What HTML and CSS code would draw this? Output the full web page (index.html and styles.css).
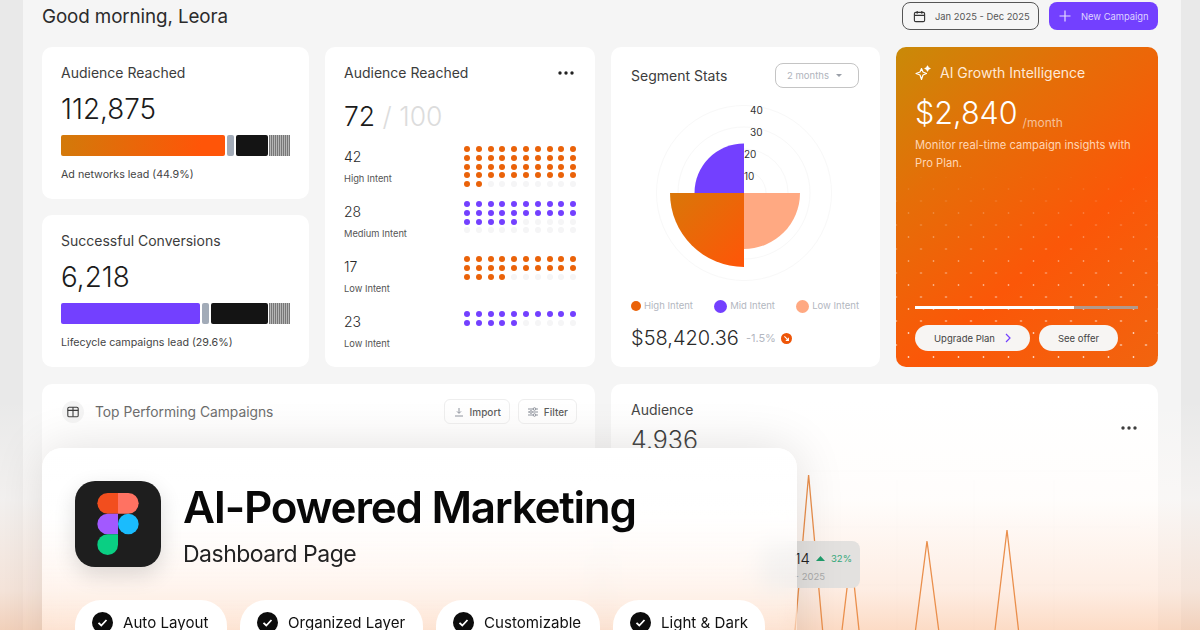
FILE: index.html
```html
<!DOCTYPE html>
<html lang="en">
<head>
<meta charset="utf-8">
<title>AI-Powered Marketing Dashboard</title>
<link rel="stylesheet" href="styles.css">
</head>
<body>
<div class="stage">
  <main class="page">
    <header class="top">
      <h1 class="hello">Good morning, Leora</h1>
      <div class="top-actions">
        <button class="date-btn">
          <svg width="13" height="13" viewBox="0 0 14 14" fill="none" stroke="#333" stroke-width="1.2"><rect x="1.5" y="2.5" width="11" height="10" rx="1.5"/><path d="M1.5 5.8h11M4.5 1v3M9.5 1v3"/></svg>
          <span>Jan 2025 - Dec 2025</span>
        </button>
        <button class="new-btn">
          <svg width="12" height="12" viewBox="0 0 12 12" stroke="#e6dcff" stroke-width="1.2"><path d="M6 .5v11M.5 6h11"/></svg>
          <span>New Campaign</span>
        </button>
      </div>
    </header>

    <section class="row-one">
      <div class="stack">
        <article class="card metric">
          <h2 class="title">Audience Reached</h2>
          <div class="big">112,875</div>
          <div class="bar">
            <span class="seg seg-orange"></span><span class="seg seg-grey"></span><span class="seg seg-black"></span><span class="seg-hatch"></span>
          </div>
          <p class="caption">Ad networks lead (44.9%)</p>
        </article>
        <article class="card metric">
          <h2 class="title">Successful Conversions</h2>
          <div class="big">6,218</div>
          <div class="bar">
            <span class="seg seg-purple"></span><span class="seg seg-grey"></span><span class="seg seg-black2"></span><span class="seg-hatch"></span>
          </div>
          <p class="caption">Lifecycle campaigns lead (29.6%)</p>
        </article>
      </div>

      <article class="card intent">
        <div class="intent-head">
          <h2 class="title">Audience Reached</h2>
          <svg class="more" width="16" height="4" viewBox="0 0 16 4" fill="#222"><circle cx="2" cy="2" r="1.7"/><circle cx="8" cy="2" r="1.7"/><circle cx="14" cy="2" r="1.7"/></svg>
        </div>
        <div class="score"><span>72</span> <em>/ 100</em></div>
        <div class="intent-row">
          <div class="intent-text"><div class="num">42</div><div class="lab">High Intent</div></div>
          <div class="dots o">
            <i></i><i></i><i></i><i></i><i></i><i></i><i></i><i></i><i></i><i></i>
            <i></i><i></i><i></i><i></i><i></i><i></i><i></i><i></i><i></i><i></i>
            <i></i><i></i><i></i><i></i><i></i><i></i><i></i><i></i><i></i><i></i>
            <i></i><i></i><i></i><i></i><i></i><i></i><i></i><i></i><i></i><i></i>
            <i></i><i></i><b></b><b></b><b></b><b></b><b></b><b></b><b></b><b></b>
          </div>
        </div>
        <div class="intent-row">
          <div class="intent-text"><div class="num">28</div><div class="lab">Medium Intent</div></div>
          <div class="dots p">
            <i></i><i></i><i></i><i></i><i></i><i></i><i></i><i></i><i></i><i></i>
            <i></i><i></i><i></i><i></i><i></i><i></i><i></i><i></i><i></i><i></i>
            <i></i><i></i><i></i><i></i><i></i><b></b><b></b><b></b><b></b><b></b>
            <b></b><b></b><b></b><b></b><b></b><b></b><b></b><b></b><b></b><b></b>
          </div>
        </div>
        <div class="intent-row">
          <div class="intent-text"><div class="num">17</div><div class="lab">Low Intent</div></div>
          <div class="dots o">
            <i></i><i></i><i></i><i></i><i></i><i></i><i></i><i></i><i></i><i></i>
            <i></i><i></i><i></i><i></i><i></i><i></i><i></i><i></i><i></i><i></i>
            <i></i><i></i><i></i><i></i><b></b><b></b><b></b><b></b><b></b><b></b>
          </div>
        </div>
        <div class="intent-row">
          <div class="intent-text"><div class="num">23</div><div class="lab">Low Intent</div></div>
          <div class="dots p">
            <i></i><i></i><i></i><i></i><i></i><i></i><i></i><i></i><i></i><i></i>
            <i></i><i></i><i></i><i></i><i></i><b></b><b></b><b></b><b></b><b></b>
          </div>
        </div>
      </article>

      <article class="card segment">
        <div class="segment-head">
          <h2 class="title">Segment Stats</h2>
          <button class="range">2 months <svg width="6" height="3" viewBox="0 0 6 3" fill="#9a9fa8"><path d="M0 0h6L3 3z"/></svg></button>
        </div>
        <svg class="polar" width="176" height="176" viewBox="0 0 176 176">
          <defs>
            <linearGradient id="og" x1="0" y1="0" x2="1" y2="1"><stop offset="0" stop-color="#d97708"/><stop offset="1" stop-color="#ff5508"/></linearGradient>
          </defs>
          <g fill="none" stroke="#f8f8f8">
            <circle cx="88" cy="88" r="87.5"/><circle cx="88" cy="88" r="66"/><circle cx="88" cy="88" r="44"/><circle cx="88" cy="88" r="22"/>
          </g>
          <path d="M88 88V38.5A49.5 49.5 0 0 0 38.5 88Z" fill="#7340ff"/>
          <path d="M88 88H14A74 74 0 0 0 88 162Z" fill="url(#og)"/>
          <path d="M88 88h56A56 56 0 0 1 88 144Z" fill="#ffa982"/>
          <g class="polar-ticks">
            <text x="94" y="9">40</text><text x="94" y="31">30</text><text x="88" y="53">20</text><text x="88" y="75">10</text>
          </g>
        </svg>
        <ul class="legend">
          <li><i class="l1"></i>High Intent</li>
          <li><i class="l2"></i>Mid Intent</li>
          <li><i class="l3"></i>Low Intent</li>
        </ul>
        <div class="amount">
          <strong>$58,420.36</strong><span>-1.5%</span>
          <svg width="11" height="11" viewBox="0 0 11 11"><circle cx="5.5" cy="5.5" r="5.5" fill="#ee5508"/><path d="M3.4 3.4 7.2 7.2M7.4 4.8v2.6H4.8" fill="none" stroke="#fff" stroke-width="1.1"/></svg>
        </div>
      </article>

      <article class="card pro">
        <h2 class="pro-title">
          <svg width="16" height="16" viewBox="0 0 16 16" fill="none" stroke="#fff" stroke-width="1.2" stroke-linejoin="round"><path d="M6.5 3.5 8 7l3.5 1.5L8 10l-1.5 4.5L5 10 1 8.5 5 7z"/><path d="M12.5 1 13.2 2.8 15 3.5 13.2 4.2 12.5 6 11.8 4.2 10 3.5 11.8 2.8z" fill="#fff"/></svg>
          AI Growth Intelligence
        </h2>
        <div class="price"><strong>$2,840</strong><span>/month</span></div>
        <p class="pro-text">Monitor real-time campaign insights with Pro Plan.</p>
        <div class="pro-foot">
          <div class="progress"><span></span></div>
          <div class="pro-actions">
            <button class="pill-btn upgrade">Upgrade Plan
              <svg width="6" height="10" viewBox="0 0 6 10" fill="none" stroke="#7340ff" stroke-width="1.2"><path d="M1 1l4 4-4 4"/></svg>
            </button>
            <button class="pill-btn offer">See offer</button>
          </div>
        </div>
      </article>
    </section>

    <section class="row-two">
      <article class="card campaigns">
        <div class="camp-left">
          <span class="round-icon">
            <svg width="12" height="12" viewBox="0 0 12 12" fill="none" stroke="#333" stroke-width="1.1"><rect x=".8" y="1.2" width="10.4" height="9.6" rx="1.4"/><path d="M.8 4.4h10.4M6 1.2v9.6"/></svg>
          </span>
          <h2 class="camp-title">Top Performing Campaigns</h2>
        </div>
        <div class="camp-actions">
          <button class="tool-btn">
            <svg width="10" height="10" viewBox="0 0 10 10" fill="none" stroke="#8a8f99"><path d="M5 1v5M3 4.4 5 6.4l2-2M1 9h8"/></svg>Import</button>
          <button class="tool-btn">
            <svg width="10" height="10" viewBox="0 0 10 10" fill="none" stroke="#8a8f99"><path d="M0 2h5M8 2h2M0 5h1.500M4.500 5h5.500M0 8h5M8 8h2"/><circle cx="6.500" cy="2" r="1.300"/><circle cx="3" cy="5" r="1.300"/><circle cx="6.500" cy="8" r="1.300"/></svg>Filter</button>
        </div>
      </article>
      <article class="card audience">
        <div class="aud-head">
          <div>
            <h2 class="title">Audience</h2>
            <div class="big aud-num">4.936</div>
          </div>
          <svg class="more aud-more" width="16" height="4" viewBox="0 0 16 4" fill="#222"><circle cx="2" cy="2" r="1.7"/><circle cx="8" cy="2" r="1.7"/><circle cx="14" cy="2" r="1.7"/></svg>
        </div>
      </article>
    </section>
  </main>

  <div class="fade"></div>

  <svg class="spikes" width="1200" height="630" viewBox="0 0 1200 630" fill="none">
    <g stroke="#000" stroke-opacity=".012">
      <path d="M810 471H1140M810 527H1140M810 585H1140M897 480V630M974 480V630M1054 480V630"/>
    </g>
    <g stroke="#ea8f4c" stroke-width="1.3">
      <path d="M795 630 808.6 475 822.6 630"/>
      <path d="M842 630 851 555 859 630"/>
      <path d="M915.5 630 927 541 938.7 630"/>
      <path d="M995 630 1007 530 1018.5 630"/>
    </g>
  </svg>
  <div class="tip">
    <div class="tip-top"><span class="tip-num">14</span><svg width="9" height="5" viewBox="0 0 9 5" fill="#1f9d6b"><path d="M4.500 0 9 5H0z"/></svg><span class="tip-pct">32%</span></div>
    <div class="tip-date">- 2025</div>
  </div>

  <aside class="promo">
    <div class="promo-head">
      <div class="app-icon">
        <svg width="42" height="62" viewBox="0 0 41 61.5">
          <path d="M0 10.25A10.25 10.25 0 0 1 10.25 0H20.5V20.5H10.25A10.25 10.25 0 0 1 0 10.25Z" fill="#f24e1e"/>
          <path d="M20.5 0H30.75a10.25 10.25 0 0 1 0 20.5H20.5Z" fill="#ff7262"/>
          <path d="M0 30.75A10.25 10.25 0 0 1 10.25 20.5H20.5V41H10.25A10.25 10.25 0 0 1 0 30.75Z" fill="#a259ff"/>
          <circle cx="30.75" cy="30.75" r="10.25" fill="#1abcfe"/>
          <path d="M0 51.25A10.25 10.25 0 0 1 10.25 41H20.5V51.25a10.25 10.25 0 0 1-20.5 0Z" fill="#0acf83"/>
        </svg>
      </div>
      <div class="promo-copy">
        <h2 class="promo-title">AI-Powered Marketing</h2>
        <p class="promo-sub">Dashboard Page</p>
      </div>
    </div>
    <ul class="chips">
      <li class="chip chip-a"><svg width="21" height="21" viewBox="0 0 21 21"><circle cx="10.5" cy="10.5" r="10.5" fill="#0c0c0c"/><path d="M6.5 10.8 9.3 13.5 14.5 8" fill="none" stroke="#fff" stroke-width="1.8"/></svg><span>Auto Layout</span></li>
      <li class="chip chip-b"><svg width="21" height="21" viewBox="0 0 21 21"><circle cx="10.5" cy="10.5" r="10.5" fill="#0c0c0c"/><path d="M6.5 10.8 9.3 13.5 14.5 8" fill="none" stroke="#fff" stroke-width="1.8"/></svg><span>Organized Layer</span></li>
      <li class="chip chip-c"><svg width="21" height="21" viewBox="0 0 21 21"><circle cx="10.5" cy="10.5" r="10.5" fill="#0c0c0c"/><path d="M6.5 10.8 9.3 13.5 14.5 8" fill="none" stroke="#fff" stroke-width="1.8"/></svg><span>Customizable</span></li>
      <li class="chip chip-a"><svg width="21" height="21" viewBox="0 0 21 21"><circle cx="10.5" cy="10.5" r="10.5" fill="#0c0c0c"/><path d="M6.5 10.8 9.3 13.5 14.5 8" fill="none" stroke="#fff" stroke-width="1.8"/></svg><span>Light &amp; Dark</span></li>
    </ul>
  </aside>
</div>
</body>
</html>
```
FILE: styles.css
```css
* { box-sizing: border-box; }
html, body { margin: 0; padding: 0; }
body { background: #e9e9e9; font-family: "Inter", "Liberation Sans", sans-serif; color: #222; }
button { font: inherit; cursor: pointer; }
h1, h2, p, ul { margin: 0; padding: 0; font-weight: 400; }
ul { list-style: none; }

.stage { position: relative; width: 1200px; height: 630px; overflow: hidden; background: #e9e9e9; }
.page { width: 1158px; height: 630px; margin-left: 23px; padding: 2px 23px 0 19px; background: #f5f5f5; overflow: hidden; }

/* header */
.top { display: flex; justify-content: space-between; align-items: center; height: 28px; }
.hello { font-size: 18.8px; color: #2b2b2b; letter-spacing: -0.1px; margin-top: 1px; }
.top-actions { display: flex; gap: 10px; }
.date-btn, .new-btn { height: 28px; border-radius: 8px; display: flex; align-items: center; font-size: 9.4px; }
.date-btn { width: 137px; background: transparent; border: 1px solid #555; color: #555; padding: 0 0 0 10px; gap: 9px; }
.new-btn { width: 109px; background: #7340ff; border: 0; color: #dfd4ff; padding: 0 0 0 10px; gap: 10px; }

/* first row */
.row-one { display: grid; grid-template-columns: 267px 270px 269px 262px; gap: 16px; height: 320px; margin-top: 17px; }
.stack { display: grid; grid-template-rows: 152px 152px; gap: 16px; }
.card { background: #fff; border-radius: 10px; }
.metric { padding: 17px 19px 0; }
.title { font-size: 14px; line-height: 18px; color: #3c3c3c; }
.big { font-size: 27.8px; line-height: 34px; font-weight: 300; color: #1b1b1b; margin-top: 10px; }
.bar { display: flex; height: 21px; gap: 2px; margin-top: 9px; }
.seg { border-radius: 2px; display: block; }
.seg-orange { width: 164px; background: linear-gradient(100deg, #d27a0a, #ff5508 85%); }
.seg-purple { width: 139px; background: #7340ff; }
.seg-grey { width: 7px; background: #a2abb8; }
.seg-black { width: 32px; background: #141414; }
.seg-black2 { width: 57px; background: #141414; }
.seg-hatch { margin-left: -1px; flex: 1; background: repeating-linear-gradient(90deg, #777 0, #777 1px, #b5b5b5 1px, #b5b5b5 2px); }
.caption { font-size: 10.7px; line-height: 16px; color: #444; margin-top: 11px; }

/* intent */
.intent { padding: 17px 18px 0 19px; }
.intent-head { display: flex; justify-content: space-between; align-items: center; height: 18px; }
.more { margin-right: 3px; }
.score { font-size: 26.5px; line-height: 34px; font-weight: 300; margin-top: 17px; color: #1b1b1b; height: 34px; }
.score em { font-style: normal; color: #dcdcdc; }
.intent-row { display: flex; justify-content: space-between; height: 55px; }
.score + .intent-row { margin-top: 13px; }
.intent-text { padding-top: 1px; }
.num { font-size: 14px; line-height: 20px; color: #2a2a2a; font-weight: 300; }
.lab { font-size: 9.3px; line-height: 14px; margin-top: 5px; color: #555; }
.dots { display: grid; grid-template-columns: repeat(10, 6px); column-gap: 5.8px; row-gap: 2.75px; width: 113px; align-content: start; }
.dots i, .dots b { display: block; width: 6px; height: 6px; border-radius: 50%; }
.dots b { background: #f5f5f6; }
.o i { background: #ea6209; }
.p i { background: #7340ff; }

/* segment */
.segment { padding: 16px 21px 0 20px; }
.segment-head { display: flex; justify-content: space-between; align-items: center; height: 25px; }
.range { width: 84px; height: 25px; background: #fff; border: 1px solid #c4c4c4; border-radius: 8px; color: #afb4bc; font-size: 9.5px; display: flex; align-items: center; justify-content: center; gap: 7px; padding: 0 5px 0 0; }
.polar { display: block; margin: 17px 0 0 25px; }
.polar-ticks { font-family: "Inter", sans-serif; font-size: 10px; fill: #333; }
.legend { display: flex; justify-content: space-between; margin-top: 18px; height: 14px; font-size: 9.5px; line-height: 14px; color: #b3b7bf; }
.legend li { display: flex; align-items: center; gap: 3px; }
.legend i { width: 13px; height: 13px; border-radius: 50%; display: block; }
.legend .l1 { width: 10px; height: 10px; }
.l1 { background: #ea6209; } .l2 { background: #7340ff; } .l3 { background: #ffa982; }
.amount { display: flex; align-items: center; height: 28px; margin-top: 11px; }
.amount strong { font-weight: 300; font-size: 20px; color: #2a2a2a; }
.amount span { font-size: 11px; color: #b3b7bf; margin: 0 5px 0 7px; }

/* pro */
.pro { position: relative; overflow: hidden; padding: 17px 20px 16px 19px; display: flex; flex-direction: column; color: #fff; background: linear-gradient(140deg, #c98a08 0, #e56e08 30%, #fb5708 62%, #f1640f 100%); }
.pro::before { content: ""; position: absolute; inset: 130px 0 0 0; background-image: radial-gradient(circle, rgba(255,255,255,.7) .8px, transparent 1.2px), radial-gradient(circle, rgba(255,255,255,.7) .8px, transparent 1.2px); background-size: 25px 24px; background-position: 0 0, 12.5px 12px; -webkit-mask-image: linear-gradient(to bottom, rgba(0,0,0,.06), #000 85%); mask-image: linear-gradient(to bottom, rgba(0,0,0,.06), #000 85%); }
.pro > * { position: relative; }
.pro-title { display: flex; align-items: center; gap: 9px; font-size: 14px; line-height: 18px; color: #ffe9d6; }
.price { display: flex; align-items: baseline; gap: 5px; margin-top: 9px; height: 44px; line-height: 44px; }
.price strong { font-weight: 300; font-size: 30.5px; }
.price span { font-size: 12px; color: #f5c09a; position: relative; top: 3px; }
.pro-text { font-size: 11.2px; line-height: 18px; color: #ffd5b4; margin-top: 1px; }
.pro-foot { margin-top: auto; }
.progress { height: 3px; background: #b2998c; }
.progress span { display: block; width: 159px; height: 3px; background: #fff; }
.pro-actions { display: flex; gap: 9px; margin-top: 16px; }
.pill-btn { height: 26px; border-radius: 13px; border: 0; background: #f7f5f3; color: #444; font-size: 9.5px; display: flex; align-items: center; justify-content: center; }
.upgrade { width: 115px; gap: 10px; }
.offer { width: 79px; }

/* second row */
.row-two { display: grid; grid-template-columns: 553px 547px; gap: 16px; height: 300px; margin-top: 17px; }
.campaigns { display: flex; justify-content: space-between; align-items: flex-start; padding: 15px 18px 0 20px; }
.camp-left { display: flex; align-items: center; gap: 11px; height: 25px; }
.round-icon { width: 22px; height: 22px; border-radius: 50%; background: #f4f4f4; display: flex; align-items: center; justify-content: center; }
.camp-title { font-size: 13.8px; color: #666; }
.camp-actions { display: flex; gap: 8px; }
.tool-btn { height: 25px; padding: 0 8px 0 9px; display: flex; align-items: center; gap: 6px; background: #fff; border: 1px solid #eee; border-radius: 6px; font-size: 10px; font-weight: 500; color: #555; }
.audience { padding: 17px 19px 0 20px; }
.aud-head { display: flex; justify-content: space-between; }
.aud-num { margin-top: 4px; font-size: 25px; }
.aud-more { margin: 25px 2px 0 0; }

/* overlays */
.spikes { position: absolute; left: 0; top: 0; }
.tip { position: absolute; left: 762px; top: 541px; width: 98px; height: 47px; background: #e3e1df; border-radius: 8px; padding: 8px 8px 0 0; text-align: right; }
.tip-top { display: flex; align-items: center; justify-content: flex-end; gap: 6px; }
.tip-num { font-size: 15px; font-weight: 300; color: #222; }
.tip-pct { font-size: 9.5px; color: #35a87a; }
.tip-date { font-size: 9.5px; color: #aaa; margin: 3px 27px 0 0; }
.fade { position: absolute; inset: 0; background: linear-gradient(to bottom, rgba(255,255,255,0) 400px, rgba(255,250,247,.45) 500px, rgba(253,225,208,.6) 590px, rgba(250,190,150,.55) 630px); }
.promo { position: absolute; left: 42px; top: 448px; width: 755px; height: 260px; border-radius: 20px; padding: 33px 33px 0; background: linear-gradient(to bottom, rgba(255,255,255,.98) 0, rgba(255,255,255,.85) 70px, rgba(255,243,235,.3) 182px); box-shadow: 0 0 50px rgba(0,0,0,.12); -webkit-backdrop-filter: blur(10px); backdrop-filter: blur(10px); }
.promo-head { display: flex; gap: 22px; height: 86px; }
.promo-copy { margin-top: -1px; }
.app-icon { width: 86px; height: 86px; border-radius: 20px; background: #1e1e1e; display: flex; align-items: center; justify-content: center; box-shadow: 0 8px 22px rgba(0,0,0,.14); flex: none; }
.promo-title { font-size: 44px; line-height: 54px; font-weight: 600; color: #080808; letter-spacing: -1.25px; }
.promo-sub { font-size: 23px; line-height: 30px; color: #222; margin-top: 5px; letter-spacing: -0.5px; }
.chips { display: flex; gap: 13px; margin-top: 33px; }
.chip { flex: none; height: 60px; padding: 12px 0 0 17px; display: flex; align-items: flex-start; gap: 10px; background: #fff; border-radius: 26px; font-size: 15.1px; line-height: 21px; color: #111; white-space: nowrap; }
.chip-a { width: 152px; }
.chip-b { width: 183px; }
.chip-c { width: 164px; }
```
